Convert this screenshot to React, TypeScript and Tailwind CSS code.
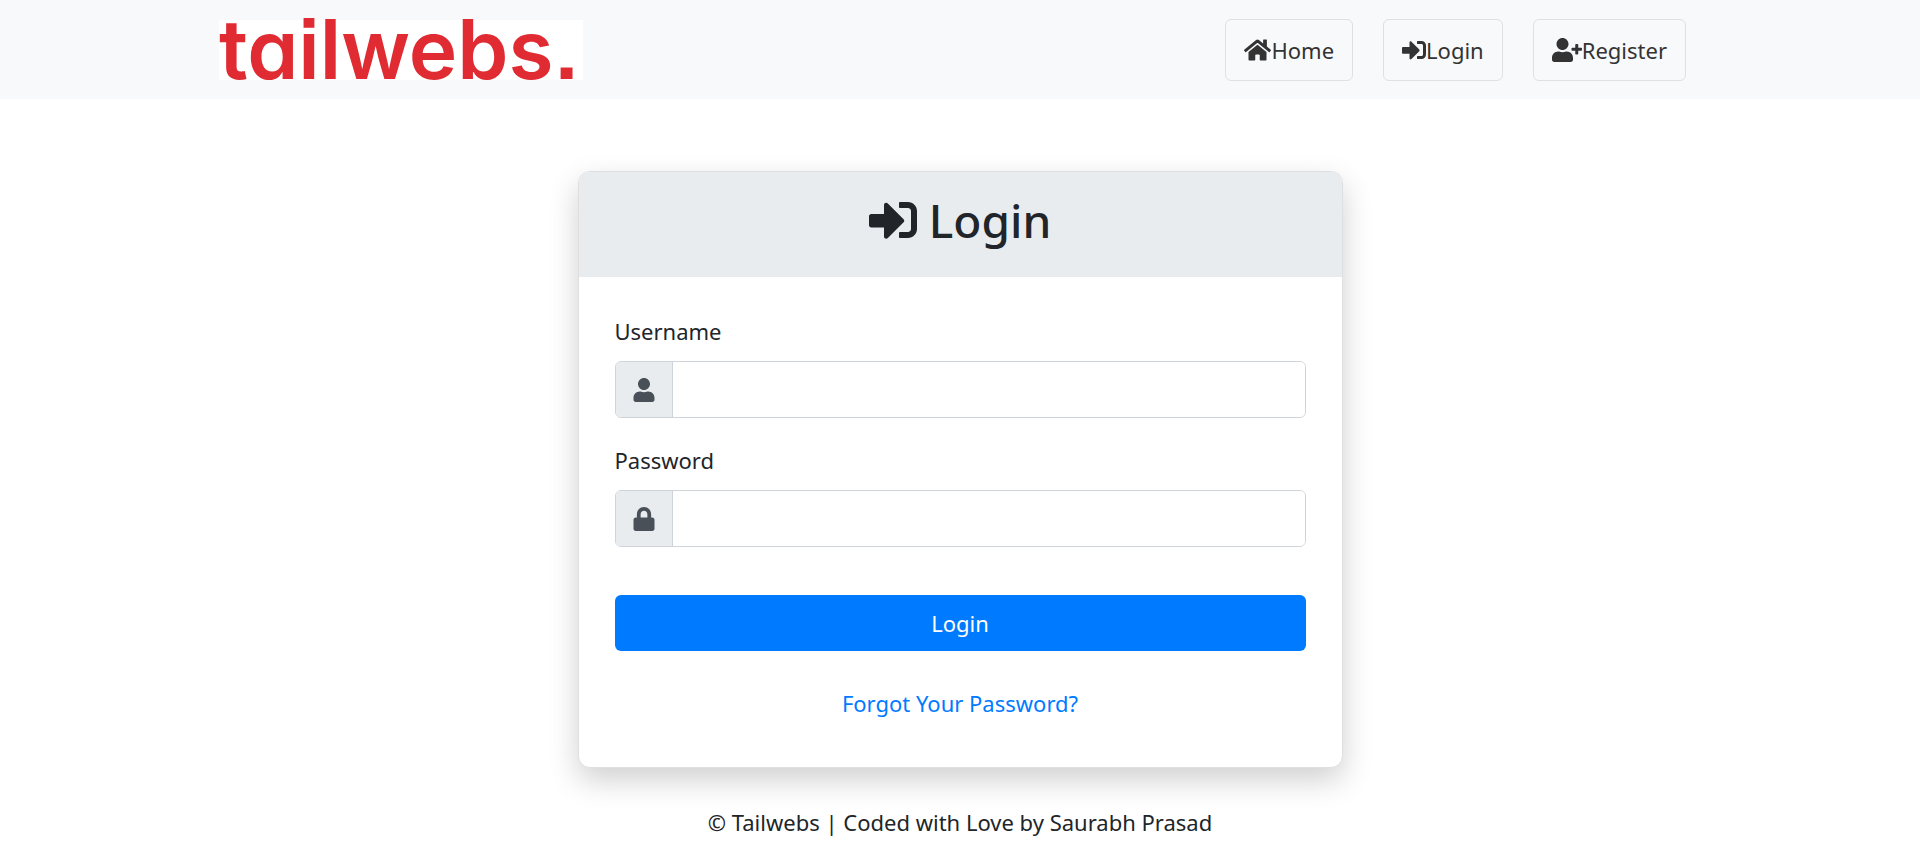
import type { InputHTMLAttributes, ReactNode } from "react";
import { FaHome, FaLock, FaSignInAlt, FaUser, FaUserPlus } from "react-icons/fa";

function NavButton({ icon, children }: { icon: ReactNode; children: ReactNode }) {
  return (
    <a
      href="#"
      className="flex h-[62px] items-center rounded-md border border-[#dee0e2] px-[18px] text-[#333]"
    >
      {icon}
      <span>{children}</span>
    </a>
  );
}

interface FieldProps extends InputHTMLAttributes<HTMLInputElement> {
  id: string;
  label: string;
  icon: ReactNode;
}

function Field({ id, label, icon, ...input }: FieldProps) {
  return (
    <div className="mb-6">
      <label htmlFor={id} className="mb-3 block">
        {label}
      </label>
      <div className="flex h-[57px] overflow-hidden rounded-md border border-[#ced4da]">
        <span className="flex w-[57px] shrink-0 items-center justify-center border-r border-[#ced4da] bg-[#e9ecef] text-2xl text-[#495057]">
          {icon}
        </span>
        <input id={id} className="min-w-0 flex-1 bg-white px-4 text-[#495057] outline-none" {...input} />
      </div>
    </div>
  );
}

export default function App() {
  return (
    <div className="min-h-screen bg-white font-['Noto_Sans',sans-serif] text-[22px] leading-9 text-[#212529]">
      <header className="bg-[#f8f9fb] px-4">
        <nav className="mx-auto flex h-[99px] max-w-[1482px] items-center justify-between pr-[15px]">
          <a
            href="#"
            className="block h-[60px] w-[364px] bg-white font-['Inter',sans-serif] text-[82px] leading-[60px] font-semibold whitespace-nowrap text-[#e02b33] [font-feature-settings:'cv11','ss07']"
          >
            tailwebs.
          </a>
          <div className="flex gap-[30px]">
            <NavButton icon={<FaHome className="h-6 w-[27px]" />}>Home</NavButton>
            <NavButton icon={<FaSignInAlt className="size-6" />}>Login</NavButton>
            <NavButton icon={<FaUserPlus className="h-6 w-[30px]" />}>Register</NavButton>
          </div>
        </nav>
      </header>

      <main className="px-4 pt-[72px]">
        <section className="mx-auto max-w-[765px] overflow-hidden rounded-xl border border-[#dfdfdf] bg-white shadow-[0_12px_30px_rgba(0,0,0,0.19)]">
          <h1 className="flex h-[105px] items-start justify-center gap-3 bg-[#e9ecef] pt-5 text-[46px] leading-14 font-medium">
            <FaSignInAlt className="mt-1 text-5xl" />
            Login
          </h1>
          <form className="px-9 pt-9 pb-[46px]" onSubmit={(event) => event.preventDefault()}>
            <Field id="username" label="Username" type="text" icon={<FaUser />} />
            <Field id="password" label="Password" type="password" icon={<FaLock />} />
            <button type="submit" className="mt-12 block h-14 w-full rounded-md bg-[#007bff] text-white">
              Login
            </button>
            <p className="mt-[34px] text-center">
              <a href="#" className="text-[#007bff]">
                Forgot Your Password?
              </a>
            </p>
          </form>
        </section>
      </main>

      <footer className="px-4 pt-9 pb-6 text-center">© Tailwebs | Coded with Love by Saurabh Prasad</footer>
    </div>
  );
}
